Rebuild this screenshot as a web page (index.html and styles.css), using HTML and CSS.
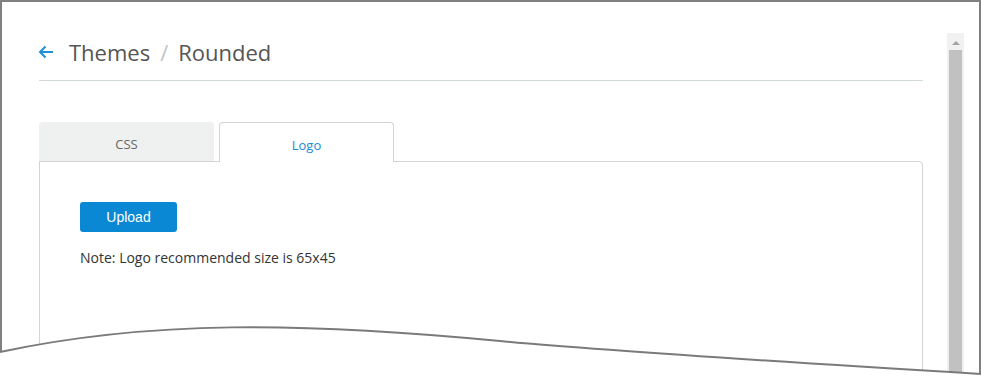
FILE: index.html
```html
<!DOCTYPE html>
<html lang="en">
<head>
  <meta charset="UTF-8">
  <meta name="viewport" content="width=device-width, initial-scale=1.0">
  <title>Themes / Rounded</title>
  <link rel="stylesheet" href="styles.css">
</head>
<body>
  <div class="shot">
    <div class="frame">
      <div class="page">
        <div class="header">
          <a class="back" href="#">
            <svg width="16" height="14" viewBox="0 0 16 14"><path d="M15 7H2M7.5 1.5L2 7l5.5 5.5" fill="none" stroke="#1e8fd8" stroke-width="2"/></svg>
          </a>
          <span class="crumb">Themes</span>
          <span class="sep">/</span>
          <span class="crumb">Rounded</span>
        </div>

        <div class="tabs">
          <div class="tab">CSS</div>
          <div class="tab active">Logo</div>
        </div>
        <div class="panel">
          <button class="upload">Upload</button>
          <p class="note">Note: Logo recommended size is 65x45</p>
        </div>
      </div>

      <div class="scrollbar">
        <div class="arrow"></div>
        <div class="thumb"></div>
      </div>
    </div>

    <!-- torn bottom edge -->
    <svg class="torn" width="981" height="376" viewBox="0 0 981 376">
      <path d="M0 352C150 320 300 322 500 341C600 350.5 800 363 981 374V376H0Z" fill="#fff"/>
      <path d="M0 352C150 320 300 322 500 341C600 350.5 800 363 981 374" fill="none" stroke="#7a7a7a" stroke-width="2"/>
    </svg>
  </div>
</body>
</html>
```

FILE: styles.css
```css
body { margin: 0; background: #fff; font-family: 'Open Sans', sans-serif; }
.shot { position: relative; width: 981px; height: 376px; overflow: hidden; }
.frame { display: flex; width: 981px; height: 376px; box-sizing: border-box; border: 2px solid #808080; border-bottom: none; }
.page { flex: 1; padding: 0 24px 0 37px; }

.header { display: flex; align-items: center; margin-top: 35px; height: 30px; padding-bottom: 13px; border-bottom: 1px solid #d3dada; font-size: 22px; color: #555; }
.back { display: flex; margin-left: -1px; margin-right: 15px; }
.sep { color: #c4c4c4; margin: 0 10px 0 10px; }

.tabs { display: flex; gap: 5px; margin-top: 41px; }
.tab { width: 175px; height: 39px; box-sizing: border-box; padding-top: 5px; display: flex; align-items: center; justify-content: center; background: #eff0f0; border-radius: 4px 4px 0 0; font-size: 13px; color: #666; }
.tab.active { background: #fff; border: 1px solid #d3d3d3; border-bottom: none; height: 40px; margin-bottom: -1px; color: #1a8ad4; position: relative; z-index: 1; }

.panel { border: 1px solid #d3d3d3; border-radius: 0 4px 0 0; padding: 40px 40px; height: 300px; }
.upload { width: 97px; height: 30px; background: #0a88d4; color: #fff; border: none; border-radius: 3px; font-family: 'Liberation Sans', Arial, sans-serif; font-size: 14px; padding: 0; cursor: pointer; }
.note { margin: 16px 0 0; font-size: 14px; line-height: 20px; color: #333; }

.scrollbar { width: 17px; margin: 31px 15px 0 0; background: #f1f1f1; display: flex; flex-direction: column; align-items: center; }
.arrow { margin-top: 8px; width: 0; height: 0; border-left: 4px solid transparent; border-right: 4px solid transparent; border-bottom: 4px solid #a3a3a3; }
.thumb { margin-top: 5px; width: 13px; flex: 1; background: #c1c1c1; }

.torn { position: absolute; left: 0; top: 0; }
```
